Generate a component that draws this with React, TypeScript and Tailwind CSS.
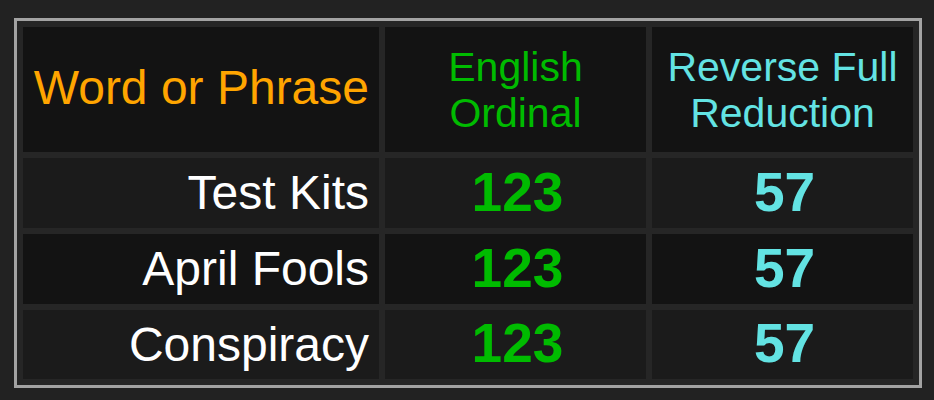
const rows = [
  { word: "Test Kits", eo: 123, rfr: 57, bg: "bg-[#1b1b1b]" },
  { word: "April Fools", eo: 123, rfr: 57, bg: "bg-[#131313]" },
  { word: "Conspiracy", eo: 123, rfr: 57, bg: "bg-[#1b1b1b]" },
];

export default function App() {
  return (
    <div
      className="w-[934px] h-[400px] bg-[#222222] pt-[18px] pl-[14px]"
      style={{ fontFamily: '"Liberation Sans", Arial, sans-serif' }}
    >
      <div className="inline-grid grid-cols-[356px_261px_261px] grid-rows-[125px_70px_70px_69px] gap-[6px] p-[6px] border-[3px] border-[#a3a3a3] bg-[#262626]">
        <div className="flex items-center justify-end pr-[10px] pb-[4px] bg-[#131313] text-[48px] text-[#ffa500] leading-none">
          Word or Phrase
        </div>
        <div className="flex items-center justify-center bg-[#131313] text-[41px] leading-[46px] text-[#00bb00] text-center">
          English
          <br />
          Ordinal
        </div>
        <div className="flex items-center justify-center bg-[#131313] text-[41px] leading-[46px] text-[#63e3e3] text-center">
          Reverse Full
          <br />
          Reduction
        </div>
        {rows.map((r) => (
          <div key={r.word} className="contents">
            <div className={`flex items-center justify-end pr-[10px] text-[48px] leading-none text-white ${r.bg}`}>
              {r.word}
            </div>
            <div className={`flex items-center justify-center pl-[4px] pb-[2px] text-[55px] font-bold leading-none text-[#00bb00] ${r.bg}`}>
              {r.eo}
            </div>
            <div className={`flex items-center justify-center pl-[4px] pb-[2px] text-[55px] font-bold leading-none text-[#63e3e3] ${r.bg}`}>
              {r.rfr}
            </div>
          </div>
        ))}
      </div>
    </div>
  );
}
